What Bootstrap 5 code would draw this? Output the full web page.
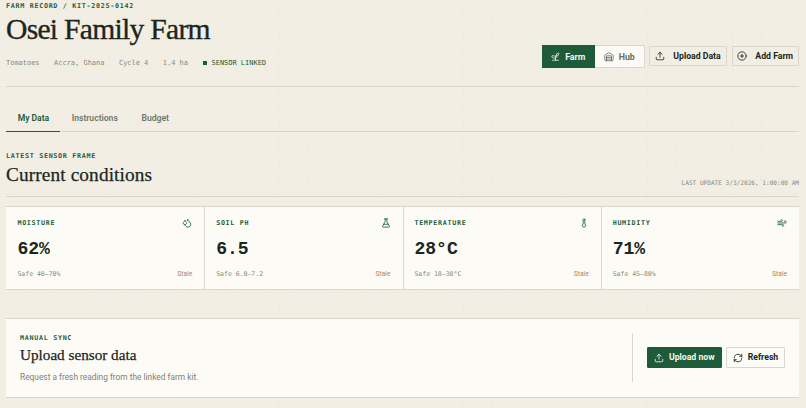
<!DOCTYPE html>
<html lang="en">
<head>
<meta charset="utf-8">
<meta name="viewport" content="width=device-width, initial-scale=1">
<title>Osei Family Farm</title>
<link href="https://cdn.jsdelivr.net/npm/bootstrap@5.3.0/dist/css/bootstrap.min.css" rel="stylesheet">
<style>
:root{--green:#1d5b3a;--ink:#1b2621;--muted:#858b80;--line:#dad7ca;--paper:#fcfbf6}
body{background-color:#f2eee3;background-image:linear-gradient(90deg,rgba(29,91,58,.016) 1px,transparent 1px),linear-gradient(rgba(29,91,58,.016) 1px,transparent 1px);background-size:14.17px 14.17px;background-position:10px 9px;color:var(--ink);font-family:Roboto,"Noto Sans",sans-serif;font-size:8px;line-height:12px;height:408px;overflow:hidden}
.page{padding:0 7px 0 6px}
.mono{font-family:"DejaVu Sans Mono",monospace}
.serif{font-family:"Liberation Serif",serif;font-weight:400;margin:0;color:var(--ink)}
.eyebrow{font-family:"DejaVu Sans Mono",monospace;font-weight:700;font-size:6.7px;letter-spacing:.71px;line-height:10px;color:var(--green);white-space:nowrap}
svg{fill:none;stroke:currentColor;stroke-width:2;stroke-linecap:round;stroke-linejoin:round;flex:none;display:block}
.top{height:87px;border-bottom:1px solid var(--line);padding-top:1px}
.title{font-size:29.6px;line-height:36px;letter-spacing:-.72px;-webkit-text-stroke:.35px}
.facts{font-size:6.97px;line-height:10px;gap:14.5px;color:var(--muted);margin-top:11px}
.dot{width:4px;height:4px;background:var(--green);margin-right:5px}
.linked{color:var(--green)}
.actions{padding-top:44px;gap:4.5px}
.switch{border:1px solid var(--line);background:var(--paper);height:23px;width:103px}
.switch>div{font-weight:700;font-size:8.8px;gap:5px;color:#687068}
.switch>.on{background:var(--green);color:#f7f7ef;width:53.5px;margin:-1px 0 -1px -1px}
.act{--bs-btn-padding-x:0;--bs-btn-padding-y:0;--bs-btn-border-radius:1px;--bs-btn-font-size:8.7px;--bs-btn-line-height:1;--bs-btn-font-weight:700;--bs-btn-color:var(--ink);--bs-btn-border-color:var(--line);height:20px;gap:8px;white-space:nowrap}
.actions .act{margin-top:1px}
.sync .act{height:21px;gap:5px}
.act.go{--bs-btn-bg:var(--green);--bs-btn-color:#f7f7ef;--bs-btn-border-color:var(--green)}
.w-up{width:78px}.w-add{width:67.5px}.w-now{width:74.5px}.w-ref{width:59px}
.tabs{height:45px;padding-top:18px;border-bottom:1px solid var(--line)}
.tabs .nav-link{padding:7px 11.8px 0;height:27px;font-size:8.6px;font-weight:600;line-height:13px;color:#6f766d;border-radius:0}
.tabs .nav-link.active{color:var(--green);border-bottom:1.5px solid var(--green)}
.tabs .nav-link:first-child{padding-right:10.8px;letter-spacing:-.05px}
.section-top{height:65px;padding-top:19px;border-bottom:1px solid var(--line)}
.section-title{font-size:19.3px;line-height:24px;-webkit-text-stroke:.25px;margin-top:2px;letter-spacing:.12px}
.updated{font-size:6.1px;line-height:10px;color:var(--muted);padding-bottom:8px}
.metrics{margin-top:9px;height:84px;background:var(--paper);border-top:1px solid var(--line);border-bottom:1px solid var(--line)}
.metric{padding:11px 12px 0 11.4px}
.metric+.metric{border-left:1px solid var(--line);padding-left:10.9px}
.reading{font-family:"Liberation Mono",monospace;font-size:18.1px;font-weight:700;line-height:22px;margin-top:10px}
.range{font-size:6.5px;line-height:10px;margin-top:9px;color:var(--muted)}
.stale{font-size:6.7px;color:#b5855a;font-family:Roboto,sans-serif}
.ic{color:var(--green)}
.sync{margin-top:28px;height:80px;background:var(--paper);border-top:1px solid var(--line);border-bottom:1px solid var(--line);padding:14px}
.sync-title{font-size:15.2px;line-height:20px;margin-top:2px;-webkit-text-stroke:.25px}
.note{font-size:8.35px;line-height:12px;color:#7c8279;margin-top:6px}
.sync-actions{border-left:1px solid var(--line);padding-left:14px;gap:4.5px;height:49px}
</style>
<script src="https://cdn.jsdelivr.net/npm/bootstrap@5.3.0/dist/js/bootstrap.bundle.min.js"></script>
</head>
<body>
<main class="page">
  <header class="top d-flex justify-content-between">
    <div>
      <div class="eyebrow">FARM RECORD / KIT-2025-0142</div>
      <h1 class="serif title text-nowrap">Osei Family Farm</h1>
      <div class="facts mono d-flex text-nowrap">
        <span>Tomatoes</span><span>Accra, Ghana</span><span>Cycle 4</span><span>1.4 ha</span>
        <span class="linked d-flex align-items-center"><i class="dot"></i>SENSOR LINKED</span>
      </div>
    </div>
    <div class="actions d-flex align-items-start">
      <div class="switch d-flex">
        <div class="on d-flex align-items-center justify-content-center"><svg width="9" height="9" viewBox="0 0 24 24"><path d="M14 9.500a8 8 0 0 1 2 4.500M12 22v-5a8 8 0 0 1 1.500-6.500A7 7 0 0 1 20 3a1 1 0 0 1 1 1 7 7 0 0 1-7 7M4 22h16M12 17a5 5 0 0 0-5-7H3a1 1 0 0 0-1 1 5 5 0 0 0 5 5c2 0 5 0 5 4"/></svg>Farm</div>
        <div class="d-flex flex-fill align-items-center justify-content-center"><svg width="10" height="10" viewBox="0 0 24 24"><path d="M18 21V10a1 1 0 0 0-1-1H7a1 1 0 0 0-1 1v11M22 19a2 2 0 0 1-2 2H4a2 2 0 0 1-2-2V8a2 2 0 0 1 1.130-1.800l8-3.950a2 2 0 0 1 1.740 0l8 3.950A2 2 0 0 1 22 8zM6 13h12M6 17h12"/></svg>Hub</div>
      </div>
      <button class="btn act w-up d-flex align-items-center justify-content-center"><svg width="10" height="10" viewBox="0 0 24 24"><path d="M12 3v12M17 8l-5-5-5 5M21 15v4a2 2 0 0 1-2 2H5a2 2 0 0 1-2-2v-4"/></svg>Upload Data</button>
      <button class="btn act w-add d-flex align-items-center justify-content-center"><svg width="10" height="10" viewBox="0 0 24 24"><circle cx="12" cy="12" r="10"/><path d="M8 12h8M12 8v8"/></svg>Add Farm</button>
    </div>
  </header>

  <nav class="tabs nav flex-nowrap">
    <a class="nav-link active">My Data</a><a class="nav-link">Instructions</a><a class="nav-link">Budget</a>
  </nav>

  <section>
    <div class="section-top d-flex justify-content-between align-items-end">
      <div class="align-self-start">
        <div class="eyebrow">LATEST SENSOR FRAME</div>
        <h2 class="serif section-title">Current conditions</h2>
      </div>
      <div class="updated mono">LAST UPDATE 3/3/2026, 1:00:00 AM</div>
    </div>
    <div class="metrics row g-0">
      <div class="metric col-3">
        <div class="d-flex justify-content-between align-items-center"><span class="eyebrow">MOISTURE</span><svg class="ic" width="10" height="10" viewBox="0 0 24 24"><path d="M7 16.300c2.200 0 4-1.830 4-4.050 0-1.160-.57-2.260-1.710-3.190S7.290 6.750 7 5.300c-.29 1.450-1.140 2.840-2.290 3.760S3 11.100 3 12.250c0 2.220 1.800 4.050 4 4.050zM12.560 6.600A11 11 0 0 0 14 3c.5 2.500 2 4.900 4 6.500s3 3.500 3 5.500a7 7 0 0 1-11.900 5"/></svg></div>
        <div class="reading">62%</div>
        <div class="range mono d-flex justify-content-between"><span>Safe 40–70%</span><span class="stale">Stale</span></div>
      </div>
      <div class="metric col-3">
        <div class="d-flex justify-content-between align-items-center"><span class="eyebrow">SOIL PH</span><svg class="ic" width="10" height="10" viewBox="0 0 24 24"><path d="M14 2v6a2 2 0 0 0 .25.960l5.500 10.080A2 2 0 0 1 18 22H6a2 2 0 0 1-1.750-2.960L9.750 8.960A2 2 0 0 0 10 8V2M6.500 15h11M8.500 2h7"/></svg></div>
        <div class="reading">6.5</div>
        <div class="range mono d-flex justify-content-between"><span>Safe 6.0–7.2</span><span class="stale">Stale</span></div>
      </div>
      <div class="metric col-3">
        <div class="d-flex justify-content-between align-items-center"><span class="eyebrow">TEMPERATURE</span><svg class="ic" width="10" height="10" viewBox="0 0 24 24"><path d="M14 4v10.540a4 4 0 1 1-4 0V4a2 2 0 0 1 4 0Z"/></svg></div>
        <div class="reading">28°C</div>
        <div class="range mono d-flex justify-content-between"><span>Safe 18–30°C</span><span class="stale">Stale</span></div>
      </div>
      <div class="metric col-3">
        <div class="d-flex justify-content-between align-items-center"><span class="eyebrow">HUMIDITY</span><svg class="ic" width="10" height="10" viewBox="0 0 24 24"><path d="M12.800 19.600A2 2 0 1 0 14 16H2M17.500 8a2.500 2.500 0 1 1 2 4H2M9.800 4.400A2 2 0 1 1 11 8H2"/></svg></div>
        <div class="reading">71%</div>
        <div class="range mono d-flex justify-content-between"><span>Safe 45–80%</span><span class="stale">Stale</span></div>
      </div>
    </div>
  </section>

  <section class="sync d-flex justify-content-between">
    <div>
      <div class="eyebrow">MANUAL SYNC</div>
      <h3 class="serif sync-title">Upload sensor data</h3>
      <p class="note mb-0">Request a fresh reading from the linked farm kit.</p>
    </div>
    <div class="sync-actions d-flex align-items-center">
      <button class="btn act go w-now d-flex align-items-center justify-content-center"><svg width="10" height="10" viewBox="0 0 24 24"><path d="M12 3v12M17 8l-5-5-5 5M21 15v4a2 2 0 0 1-2 2H5a2 2 0 0 1-2-2v-4"/></svg>Upload now</button>
      <button class="btn act w-ref d-flex align-items-center justify-content-center"><svg width="10" height="10" viewBox="0 0 24 24"><path d="M3 12a9 9 0 0 1 9-9 9.750 9.750 0 0 1 6.740 2.740L21 8M21 3v5h-5M21 12a9 9 0 0 1-9 9 9.750 9.750 0 0 1-6.740-2.740L3 16M8 16H3v5"/></svg>Refresh</button>
    </div>
  </section>
</main>
</body>
</html>
